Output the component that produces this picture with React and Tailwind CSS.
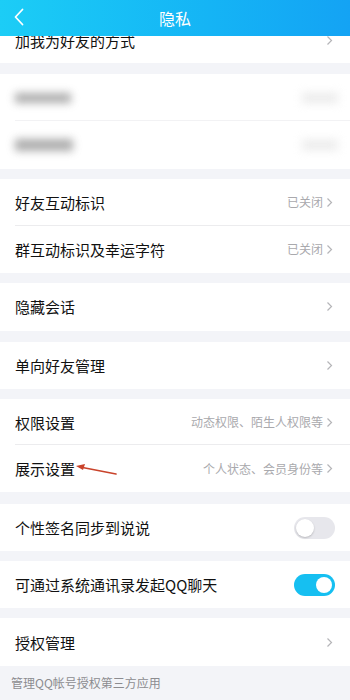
import React from "react";

const font = { fontFamily: '"Noto Sans CJK SC", "Noto Sans", sans-serif' };

function Chevron() {
  return (
    <svg width="7" height="11" viewBox="0 0 7 11" className="shrink-0">
      <polyline points="1.5,1.5 5.5,5.5 1.5,9.5" fill="none" stroke="#b5b5b8" strokeWidth="1.2" />
    </svg>
  );
}

function Row({ label, value, chevron = true, divider = false, h = "h-[47px]", children }) {
  return (
    <div className={`relative flex items-center ${h} pl-[15px] pr-[17px] bg-white`}>
      <span className="text-[15px] text-[#111] flex-1 leading-none">{label}</span>
      {value && <span className="text-[12px] text-[#a9a9ad] mr-[3px] leading-none">{value}</span>}
      {chevron && <Chevron />}
      {children}
      {divider && <div className="absolute left-[15px] right-0 bottom-0 h-px bg-[#ececee]" />}
    </div>
  );
}

function Toggle({ on }) {
  return on ? (
    <div className="w-[41px] h-[22px] rounded-full bg-[#16bff1] flex items-center justify-end pr-[3px] -mr-[2px]">
      <div className="w-[16px] h-[16px] rounded-full bg-white" />
    </div>
  ) : (
    <div className="w-[41px] h-[22px] rounded-full bg-[#e7e7ec] flex items-center pl-[2px] -mr-[2px]">
      <div className="w-[18px] h-[18px] rounded-full bg-white shadow-[0_1px_2px_rgba(0,0,0,0.2)]" />
    </div>
  );
}

function Gap({ h }) {
  return <div className={`${h} shrink-0 bg-[#f3f4f8]`} />;
}

export default function App() {
  return (
    <div className="w-[350px] h-[700px] overflow-hidden bg-[#f3f4f8] flex flex-col" style={font}>
      <div className="relative z-10 h-[36px] shrink-0 flex items-center justify-center bg-gradient-to-r from-[#1ccdf6] to-[#14a3f4]">
        <svg width="12" height="18" viewBox="0 0 12 18" className="absolute left-[13px] top-[8px]">
          <polyline points="9.5,1.5 2.5,9 9.5,16.5" fill="none" stroke="#ffffff" strokeWidth="1.8" strokeLinecap="round" strokeLinejoin="round" />
        </svg>
        <span className="text-white text-[16px] leading-none">隐私</span>
      </div>

      <div className="h-[27px] shrink-0 overflow-hidden">
        <div className="-mt-[19px]">
          <Row label="加我为好友的方式" />
        </div>
      </div>
      <Gap h="h-[11px]" />
      <div className="relative h-[47px] shrink-0 bg-white flex items-center pl-[15px] pr-[12px]">
        <div className="w-[56px] h-[10px] bg-[#8a8a8a] blur-[4px] opacity-70" />
        <div className="flex-1" />
        <div className="w-[36px] h-[10px] bg-[#e2e2e2] blur-[5px] opacity-70" />
        <div className="absolute left-[15px] right-0 bottom-0 h-px bg-[#f2f2f4]" />
      </div>
      <div className="h-[48px] shrink-0 bg-white flex items-center pl-[15px] pr-[12px]">
        <div className="w-[58px] h-[12px] bg-[#8a8a8a] blur-[4px] opacity-70" />
        <div className="flex-1" />
        <div className="w-[36px] h-[10px] bg-[#e2e2e2] blur-[5px] opacity-70" />
      </div>
      <Gap h="h-[10px]" />
      <Row label="好友互动标识" value="已关闭" divider />
      <Row label="群互动标识及幸运字符" value="已关闭" />
      <Gap h="h-[10px]" />
      <Row label="隐藏会话" h="h-[48px]" />
      <Gap h="h-[11px]" />
      <Row label="单向好友管理" />
      <Gap h="h-[10px]" />
      <Row label="权限设置" value="动态权限、陌生人权限等" divider />
      <Row label="展示设置" value="个人状态、会员身份等">
        <svg width="50" height="16" viewBox="0 0 50 16" className="absolute left-[74px] top-[16px]">
          <line x1="6" y1="6" x2="42" y2="13" stroke="#c9432b" strokeWidth="1.6" strokeLinecap="round" />
          <polygon points="2,5 11,3 9,9" fill="#c9432b" />
        </svg>
      </Row>
      <Gap h="h-[12px]" />
      <Row label="个性签名同步到说说" chevron={false}>
        <Toggle on={false} />
      </Row>
      <Gap h="h-[10px]" />
      <Row label="可通过系统通讯录发起QQ聊天" chevron={false}>
        <Toggle on />
      </Row>
      <Gap h="h-[10px]" />
      <Row label="授权管理" h="h-[48px]" />
      <div className="h-[34px] shrink-0 flex items-center pl-[11px] text-[12px] text-[#8c8c90] leading-none">
        管理QQ帐号授权第三方应用
      </div>
    </div>
  );
}
